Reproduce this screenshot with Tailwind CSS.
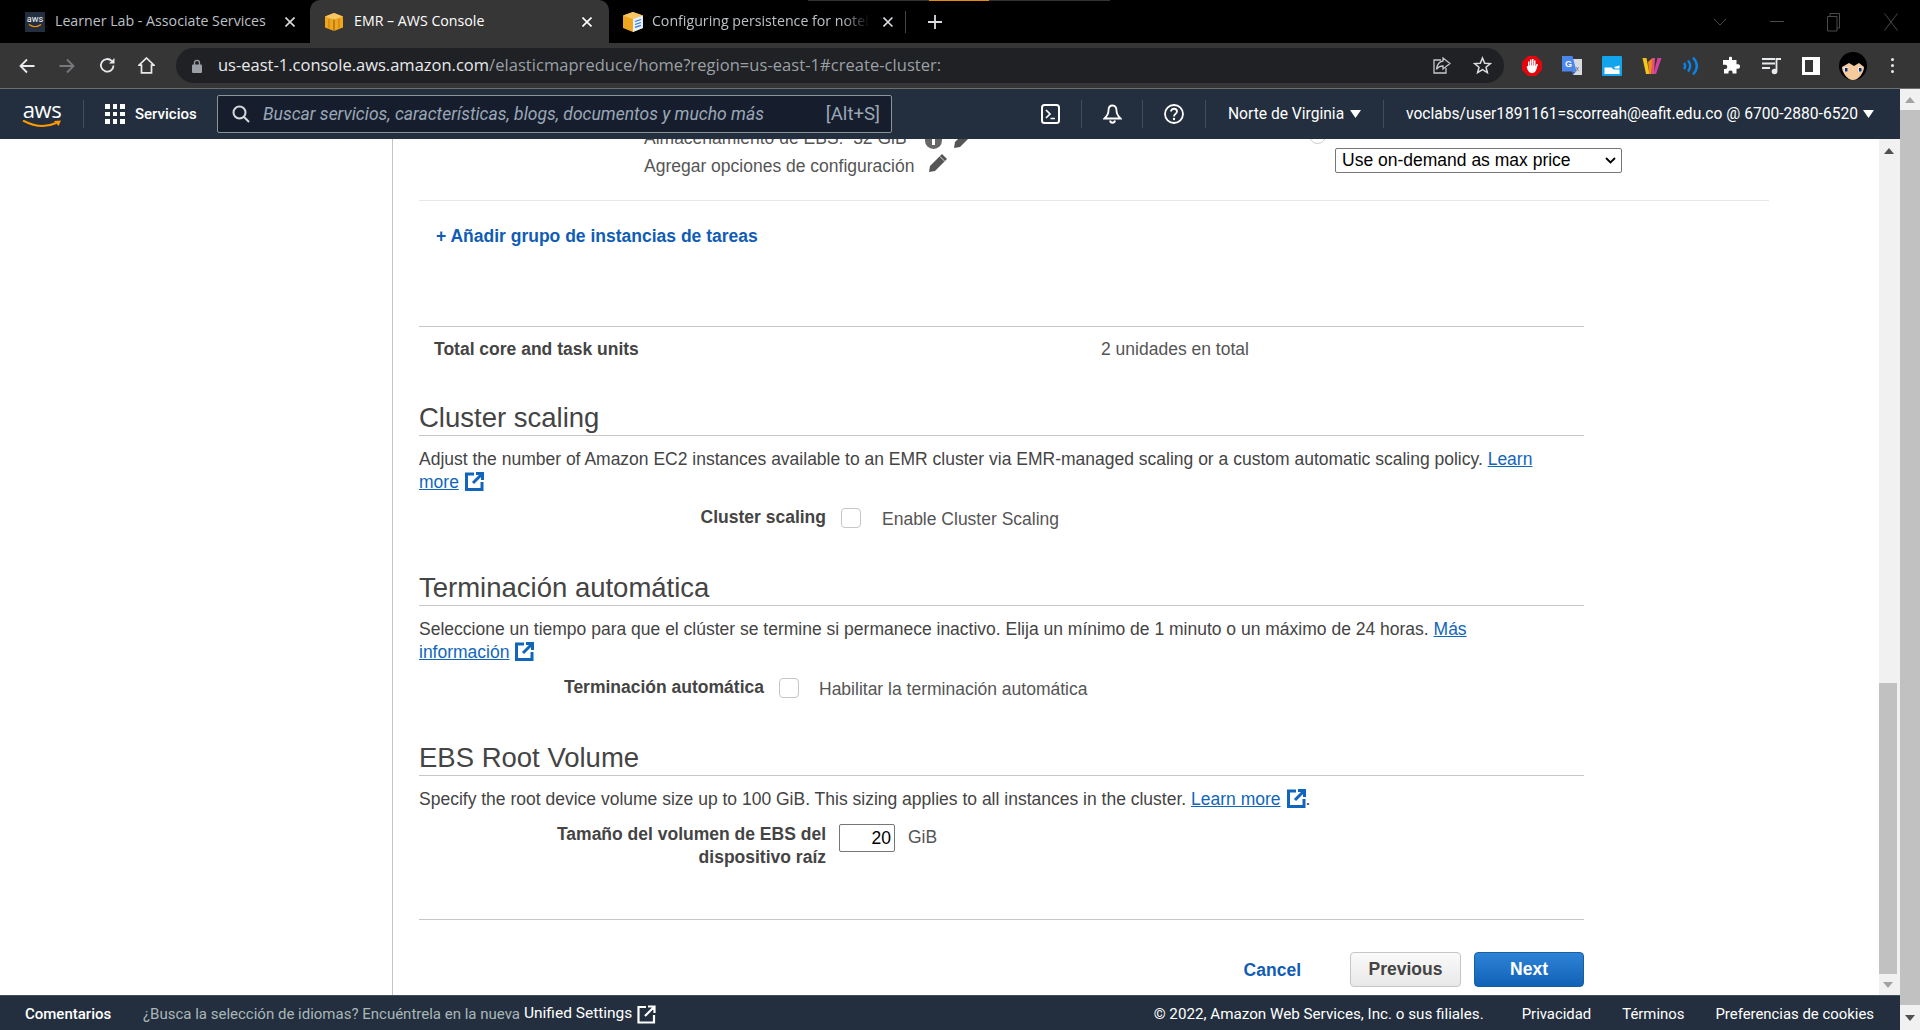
<!DOCTYPE html>
<html lang="es">
  <head>
    <meta charset="UTF-8" />
    <title>EMR – AWS Console</title>
    <script src="https://cdn.jsdelivr.net/npm/@tailwindcss/browser@4"></script>
  </head>
  <body class="relative h-[1030px] w-[1920px] overflow-hidden bg-white font-['Liberation_Sans',Arial,sans-serif] text-[17.5px] text-[#444]">
    <!-- page load streak on top of the window -->
    <div class="absolute left-[808px] top-0 h-px w-[302px] bg-[#333]"></div>
    <div class="absolute left-[929px] top-0 h-px w-[60px] bg-[#e8890c]"></div>

    <!-- tab strip -->
    <div class="flex h-[43px] items-center bg-black font-['Open_Sans',sans-serif] text-[14.2px]">
      <div class="flex h-full w-[310px] items-center pl-[25px] text-[#bdc1c6]">
        <div class="flex h-5 w-5 flex-col items-center justify-center bg-[#232f3e] font-['Roboto',sans-serif] text-[9px] leading-[9px] text-white">
          aws
          <svg class="h-[4px] w-[14px]" viewBox="0 0 14 4"><path d="M1 0.5 Q7 5 13 0.5" fill="none" stroke="#f90" stroke-width="1.2" /></svg>
        </div>
        <span class="ml-[10px] mt-[-2px] w-[213px] whitespace-nowrap">Learner Lab - Associate Services</span>
        <svg class="ml-[17px] h-[10px] w-[10px]" viewBox="0 0 10 10"><path d="M0.5 0.5 9.5 9.5M9.5 0.5 0.5 9.5" stroke="#dadce0" stroke-width="1.6" /></svg>
      </div>
      <div class="flex h-full w-[299px] items-center rounded-t-[10px] bg-[#363636] pl-[15px] text-white">
        <svg class="h-[18px] w-[18px]" viewBox="0 0 18 18"><path d="M9 0 18 3.500V14.500L9 18 0 14.500V3.500Z" fill="#f0a51e" /><path d="M0 3.500 9 0 18 3.500 9 6.500Z" fill="#f7c766" /><path d="M9 6.500V18" stroke="#8a5a10" stroke-width="1" /><path d="M4 6V15.500M14 6V15.500" stroke="#d08a12" stroke-width="1.500" /></svg>
        <span class="ml-[11px] mt-[-2px] w-[228px] whitespace-nowrap">EMR – AWS Console</span>
        <svg class="h-[10px] w-[10px]" viewBox="0 0 10 10"><path d="M0.5 0.5 9.5 9.5M9.5 0.5 0.5 9.5" stroke="#fff" stroke-width="1.6" /></svg>
      </div>
      <div class="flex h-full w-[297px] items-center pl-[14px] text-[#bdc1c6]">
        <svg class="h-5 w-5" viewBox="0 0 20 20"><path d="M10 0 20 3.500V16L10 20 0 16V3.500Z" fill="#f0a51e" /><path d="M0 3.500 10 0 20 3.500 10 7Z" fill="#f7c766" /><path d="M10 7 20 3.500V16L10 20Z" fill="#e8f0fa" /><path d="M12 9.500 18 7.500M12 12.500 18 10.500M12 15.500 18 13.500" stroke="#2d7ad6" stroke-width="1.300" /></svg>
        <span class="ml-[9px] mt-[-2px] w-[218px] overflow-hidden whitespace-nowrap [mask-image:linear-gradient(to_right,black_88%,transparent)]">Configuring persistence for notebooks</span>
        <svg class="ml-[14px] h-[10px] w-[10px]" viewBox="0 0 10 10"><path d="M0.5 0.5 9.5 9.5M9.5 0.5 0.5 9.5" stroke="#dadce0" stroke-width="1.6" /></svg>
        <div class="ml-[12px] h-[22px] w-px bg-[#444]"></div>
      </div>
      <svg class="ml-[22px] h-[14px] w-[14px]" viewBox="0 0 14 14"><path d="M7 0V14M0 7H14" stroke="#dadce0" stroke-width="1.8" /></svg>
      <div class="ml-auto flex items-center gap-[43px] pr-[22px]">
        <svg class="h-[8px] w-[14px]" viewBox="0 0 14 8"><path d="M1 1 7 7 13 1" fill="none" stroke="#4a4a4a" /></svg>
        <div class="h-px w-[14px] bg-[#4a4a4a]"></div>
        <svg class="h-[20px] w-[14px]" viewBox="0 0 14 20"><path d="M3 4V1.500H12.500V16H10M0.500 4.500H10V19H0.500Z" fill="none" stroke="#4a4a4a" /></svg>
        <svg class="h-[18px] w-[14px]" viewBox="0 0 14 18"><path d="M0.500 0.500 13.500 17.500M13.500 0.500 0.500 17.500" stroke="#4a4a4a" /></svg>
      </div>
    </div>

    <!-- browser toolbar -->
    <div class="flex h-[45px] items-center bg-[#363636]">
      <div class="flex w-[176px] items-center pl-[19px]">
        <svg class="h-4 w-4" viewBox="0 0 16 16"><path d="M15.500 8H1.500M8 1.500 1.500 8 8 14.500" fill="none" stroke="#e8eaed" stroke-width="1.800" /></svg>
        <svg class="ml-[24px] h-4 w-4" viewBox="0 0 16 16"><path d="M0.500 8H14.500M8 1.500 14.500 8 8 14.500" fill="none" stroke="#77797c" stroke-width="1.800" /></svg>
        <svg class="ml-[24px] h-[17px] w-[17px]" viewBox="0 0 17 17"><path d="M14.500 8.500A6.300 6.300 0 1 1 12.800 4" fill="none" stroke="#e8eaed" stroke-width="1.800" /><path d="M15.500 1V6.500H10Z" fill="#e8eaed" /></svg>
        <svg class="ml-[22px] h-[17px] w-[17px]" viewBox="0 0 17 17"><path d="M8.500 1 16 8.200H13.500V15.800H3.500V8.200H1Z" fill="none" stroke="#e8eaed" stroke-width="1.700" /></svg>
      </div>
      <div class="flex h-[35px] w-[1328px] items-center rounded-full bg-[#202124] pl-[16px]">
        <svg class="h-[14px] w-[10px]" viewBox="0 0 10 14"><path d="M2.500 6V3.800A2.500 2.500 0 0 1 7.500 3.800V6" fill="none" stroke="#9aa0a6" stroke-width="1.300" /><rect x="0" y="5.500" width="10" height="8.500" rx="1" fill="#9aa0a6" /></svg>
        <span class="ml-[16px] w-[1210px] whitespace-nowrap font-['Open_Sans',sans-serif] text-[16.5px] text-[#e8eaed]">us-east-1.console.aws.amazon.com<span class="tracking-[0.05px] text-[#9aa0a6]">/elasticmapreduce/home?region=us-east-1#create-cluster:</span></span>
        <svg class="ml-[4px] h-[19px] w-[19px] shrink-0" viewBox="0 0 19 19"><path d="M9 4H2V17H14V12" fill="none" stroke="#c4c7c9" stroke-width="1.300" /><path d="M11 2 18 7.500 11 13V10C8 10 6 11 4.500 13.500 5 9 7.500 5.500 11 5Z" fill="#202124" stroke="#c4c7c9" stroke-width="1.300" /></svg>
        <svg class="ml-[22px] h-[19px] w-[19px] shrink-0" viewBox="0 0 19 19"><path d="M9.500 2 11.700 7.200 17.300 7.600 13 11.200 14.400 16.700 9.500 13.700 4.600 16.700 6 11.200 1.700 7.600 7.300 7.200Z" fill="none" stroke="#dadce0" stroke-width="1.500" /></svg>
      </div>
      <!-- extensions -->
      <div class="flex items-center">
        <svg class="ml-[18px] h-5 w-5" viewBox="0 0 20 20"><path d="M6 0H14L20 6V14L14 20H6L0 14V6Z" fill="#e2070d" /><path d="M4.500 10.500 6 10V5.500H7.500V9.500H8V3.500H9.500V9.500H10V3H11.500V9.500H12V4.500H13.500V10.500L14.500 8H16L14.500 13C13.800 15.500 12.500 17 10 17 7.500 17 6.500 15.500 5.500 13.500Z" fill="#fff" /></svg>
        <svg class="ml-[20px] h-[20px] w-[21px]" viewBox="0 0 21 20"><path d="M9 3H20V19H11Z" fill="#d8dce0" /><path d="M0 0H10.500L14.500 15.500H0Z" fill="#4b86ea" /><path d="M10 15.500 11 19 14 15.500Z" fill="#3a61b8" /><text x="3" y="10.500" font-size="9" font-weight="700" fill="#fff" font-family="Liberation Sans">G</text><text x="13.500" y="15" font-size="7" fill="#666" font-family="Liberation Sans">x</text></svg>
        <svg class="ml-[19px] h-5 w-5" viewBox="0 0 20 20"><rect width="20" height="20" rx="1" fill="#12a5ec" /><path d="M2.500 11.500H9.500L11.500 13.500H17.500V18H2.500Z" fill="#fff" /><path d="M12 11 17.500 9.500V12.500H13Z" fill="#fff" /></svg>
        <svg class="ml-[20px] h-5 w-5" viewBox="0 0 20 20"><path d="M0.500 2H4.500L7.500 18H4Z" fill="#f4c61a" /><path d="M6 6 10.500 2 9.500 18H7Z" fill="#ee8a1e" /><path d="M10 2H13L12 18H9.500Z" fill="#e8517c" /><path d="M15.500 2H19.500L14 18H11.500Z" fill="#d63fa0" /></svg>
        <svg class="ml-[21px] h-5 w-[18px]" viewBox="0 0 18 20"><path d="M1 7C2.500 9 2.500 11 1 13M5 4.500C7.800 8 7.800 12 5 15.500M10 1.500C15 7 15 13 10 18.500" fill="none" stroke="#0a84e8" stroke-width="2.400" /></svg>
        <svg class="ml-[21px] h-[19px] w-[19px]" viewBox="0 0 19 19"><path d="M7 1.500C7 0.400 10 0.400 10 1.500V4H14.500V8.300H16.200C18.700 8.300 18.700 12.800 16.200 12.800H14.500V17.500H10.500V16C10.500 14 6.500 14 6.500 16V17.500H2V13H3.500C5.800 13 5.800 8.700 3.500 8.700H1V4H7Z" fill="#fff" /></svg>
        <svg class="ml-[21px] h-[18px] w-5" viewBox="0 0 20 18"><path d="M0 2H13M0 6.500H13M0 11H8" stroke="#e8eaed" stroke-width="1.800" /><path d="M14.500 14V2H19" fill="none" stroke="#e8eaed" stroke-width="1.800" /><circle cx="12.500" cy="14.500" r="2.800" fill="#e8eaed" /></svg>
        <div class="ml-[20px] h-[18px] w-[18px] border-y-[3px] border-r-[7px] border-l-[3px] border-white bg-[#363636]"></div>
        <svg class="ml-[19px] h-[28px] w-[28px]" viewBox="0 0 28 28"><circle cx="14" cy="14" r="14" fill="#000" /><path d="M3 15C3 20 8 28 14 28 20 28 25 20 25 15L20 11 15 14 10 11Z" fill="#f5cb9e" /><rect x="5" y="15" width="4" height="5" fill="#dfe5f2" /><rect x="19" y="15" width="4" height="5" fill="#dfe5f2" /><rect x="6" y="16" width="2.500" height="3.500" fill="#1c2750" /><rect x="20" y="16" width="2.500" height="3.500" fill="#1c2750" /></svg>
        <div class="ml-[24px] flex flex-col gap-[3px]"><i class="block h-[3px] w-[3px] rounded-full bg-[#e8eaed]"></i><i class="block h-[3px] w-[3px] rounded-full bg-[#e8eaed]"></i><i class="block h-[3px] w-[3px] rounded-full bg-[#e8eaed]"></i></div>
      </div>
    </div>
    <div class="h-px bg-[#6b6f70]"></div>

    <div class="flex h-[941px]">
      <div class="flex w-[1900px] flex-col">
        <!-- aws nav -->
        <div class="flex h-[50px] shrink-0 items-center bg-[#232f3e] font-['Roboto',sans-serif] text-[15.6px] text-white">
          <div class="flex w-[83px] flex-col items-center pl-[1px]">
            <span class="h-[20px] font-['Open_Sans',sans-serif] text-[22px] leading-[18px] tracking-[-0.4px]">aws</span>
            <svg class="h-[8px] w-[40px]" viewBox="0 0 40 8"><path d="M1 0.500Q19 10 34 3" fill="none" stroke="#f90" stroke-width="2" /><path d="M32 1 39 0.500 36.500 6" fill="#f90" /></svg>
          </div>
          <div class="h-[28px] w-px bg-[#414d5c]"></div>
          <div class="ml-[21px] grid h-5 w-5 grid-cols-3 gap-[3px]">
            <i class="bg-white"></i><i class="bg-white"></i><i class="bg-white"></i><i class="bg-white"></i><i class="bg-white"></i><i class="bg-white"></i><i class="bg-white"></i><i class="bg-white"></i><i class="bg-white"></i>
          </div>
          <span class="ml-[10px] mt-[1px] w-[82px] text-[15px] font-medium">Servicios</span>
          <div class="flex h-[38px] w-[675px] items-center rounded-[2px] border border-[#879596] bg-[#161e2d] pl-[14px] pr-[11px]">
            <svg class="h-[18px] w-[18px]" viewBox="0 0 18 18"><circle cx="7.500" cy="7.500" r="6" fill="none" stroke="#d5dbdb" stroke-width="2" /><path d="M11.800 11.800 17 17" stroke="#d5dbdb" stroke-width="2" /></svg>
            <span class="ml-[13px] mt-[1px] whitespace-nowrap text-[17.5px] text-[#9ba7b6] italic">Buscar servicios, características, blogs, documentos y mucho más</span>
            <span class="ml-auto mt-[1px] text-[18.6px] text-[#9ba7b6]">[Alt+S]</span>
          </div>
          <div class="flex h-[28px] items-center">
            <svg class="ml-[149px] h-5 w-[19px]" viewBox="0 0 19 20"><rect x="1" y="1" width="17" height="18" rx="2.500" fill="none" stroke="#fff" stroke-width="2" /><path d="M5 6 9 10 5 14M9.500 14.500H14" fill="none" stroke="#fff" stroke-width="1.700" /></svg>
            <div class="ml-[21px] h-full w-px bg-[#414d5c]"></div>
            <svg class="ml-[21px] h-[20px] w-[19px]" viewBox="0 0 19 20"><path d="M9.500 1.500C6.500 1.500 5.500 4 5.500 6.500 5.500 10 4 12 1.500 14.500H17.500C15 12 13.500 10 13.500 6.500 13.500 4 12.500 1.500 9.500 1.500ZM7 16.500C7.500 19.500 11.500 19.500 12 16.500" fill="none" stroke="#fff" stroke-width="1.800" /></svg>
            <div class="ml-[20px] h-full w-px bg-[#414d5c]"></div>
            <svg class="ml-[21px] h-5 w-5" viewBox="0 0 20 20"><circle cx="10" cy="10" r="9" fill="none" stroke="#fff" stroke-width="1.800" /><path d="M7 7.500C7 3.800 13 3.800 13 7.500 13 10 10 9.800 10 12.500" fill="none" stroke="#fff" stroke-width="1.800" /><circle cx="10" cy="15" r="1.200" fill="#fff" /></svg>
            <div class="ml-[21px] h-full w-px bg-[#414d5c]"></div>
            <span class="ml-[22px] mt-[1px] w-[116px] whitespace-nowrap">Norte de Virginia</span>
            <svg class="ml-[6px] h-[8px] w-[11px]" viewBox="0 0 11 8"><path d="M0 0H11L5.500 8Z" fill="#fff" /></svg>
            <div class="ml-[22px] h-full w-px bg-[#414d5c]"></div>
            <span class="ml-[22px] mt-[1px] w-[451px] whitespace-nowrap">voclabs/user1891161=scorreah@eafit.edu.co @ 6700-2880-6520</span>
            <svg class="ml-[6px] h-[8px] w-[11px]" viewBox="0 0 11 8"><path d="M0 0H11L5.500 8Z" fill="#fff" /></svg>
          </div>
        </div>

        <div class="flex h-[856px] shrink-0 overflow-hidden">
          <!-- empty left rail -->
          <div class="w-[393px] shrink-0 border-r border-[#c6c6c6]"></div>

          <div class="w-[1486px] shrink-0 overflow-hidden pl-[26px]">
            <!-- end of the previous instance group, scrolled under the nav -->
            <div class="flex h-[62px] w-[1350px] border-b border-[#e6e6e6]">
              <div class="mt-[-12px] w-[916px] pl-[225px] text-[#555]">
                <div class="flex h-[23px] items-center whitespace-nowrap">
                  Almacenamiento de EBS: &nbsp;32 GiB
                  <svg class="ml-[18px] mt-[3px] h-[17px] w-[17px]" viewBox="0 0 17 17"><circle cx="8.500" cy="8.500" r="8.500" fill="#666" /><rect x="7" y="7" width="3" height="6" fill="#fff" /><rect x="7" y="3" width="3" height="2.500" fill="#fff" /></svg>
                  <svg class="ml-[11px] h-[20px] w-[20px]" viewBox="0 0 20 20"><path d="M14 1 19 6 7 18 1 19 2 13Z" fill="#555" /></svg>
                </div>
                <div class="mt-[5px] flex h-[23px] items-center whitespace-nowrap">
                  Agregar opciones de configuración
                  <svg class="ml-[14px] mt-[-7px] h-[20px] w-[20px]" viewBox="0 0 20 20"><path d="M14 1 19 6 7 18 1 19 2 13Z" fill="#555" /><path d="M12 3.500 16.500 8" stroke="#fff" stroke-width="0.800" /></svg>
                </div>
              </div>
              <div class="relative">
                <div class="absolute left-[-26px] top-[-12px] h-[17px] w-[17px] rounded-full border border-[#ccc] bg-white"></div>
                <div class="mt-[9px] flex h-[25px] w-[287px] items-center justify-between rounded-[2px] border border-[#767676] bg-white pl-[6px] pr-[5px] text-black">
                  Use on-demand as max price
                  <svg class="h-[7px] w-[11px]" viewBox="0 0 11 7"><path d="M1 1 5.500 5.500 10 1" fill="none" stroke="#000" stroke-width="1.800" /></svg>
                </div>
              </div>
            </div>

            <div class="h-[125px] pl-[17px] pt-[24px] font-bold leading-[23px] text-[#105cb6]">+ Añadir grupo de instancias de tareas</div>

            <div class="flex h-[75px] w-[1165px] border-t border-[#c6c6c6] pl-[15px] pt-[11px] leading-[23px]">
              <span class="w-[667px] font-bold">Total core and task units</span>
              <span class="text-[#555]">2 unidades en total</span>
            </div>

            <section class="h-[170px] w-[1165px]">
              <h2 class="h-[35px] border-b border-[#c6c6c6] text-[27.5px] leading-[34px]">Cluster scaling</h2>
              <p class="mt-[12px] w-[1130px] leading-[23px]">Adjust the number of Amazon EC2 instances available to an EMR cluster via EMR-managed scaling or a custom automatic scaling policy. <a class="text-[#16b] underline">Learn more</a><svg class="ml-[6px] inline h-[19px] w-[19px] align-[-3px]" viewBox="0 0 19 19"><path d="M9 2H1.500V17.500H17V10M11 1.500H17.500V8M17 2 8 11" fill="none" stroke="#16b" stroke-width="3" /></svg></p>
              <div class="mt-[12px] flex">
                <span class="w-[407px] text-right font-bold leading-[23px]">Cluster scaling</span>
                <span class="ml-[15px] mt-[2px] h-5 w-5 rounded-[4px] border border-[#c6c6c6] bg-white"></span>
                <span class="ml-[21px] mt-[2px] leading-[23px] text-[#555]">Enable Cluster Scaling</span>
              </div>
            </section>

            <section class="h-[170px] w-[1165px]">
              <h2 class="h-[35px] border-b border-[#c6c6c6] text-[27.5px] leading-[34px]">Terminación automática</h2>
              <p class="mt-[12px] w-[1130px] leading-[23px]">Seleccione un tiempo para que el clúster se termine si permanece inactivo. Elija un mínimo de 1 minuto o un máximo de 24 horas. <a class="text-[#16b] underline">Más información</a><svg class="ml-[6px] inline h-[19px] w-[19px] align-[-3px]" viewBox="0 0 19 19"><path d="M9 2H1.500V17.500H17V10M11 1.500H17.500V8M17 2 8 11" fill="none" stroke="#16b" stroke-width="3" /></svg></p>
              <div class="mt-[12px] flex">
                <span class="w-[345px] text-right font-bold leading-[23px]">Terminación automática</span>
                <span class="ml-[15px] mt-[2px] h-5 w-5 rounded-[4px] border border-[#c6c6c6] bg-white"></span>
                <span class="ml-[20px] mt-[2px] leading-[23px] text-[#555]">Habilitar la terminación automática</span>
              </div>
            </section>

            <section class="h-[178px] w-[1165px]">
              <h2 class="h-[35px] border-b border-[#c6c6c6] text-[27.5px] leading-[34px]">EBS Root Volume</h2>
              <p class="mt-[12px] w-[1130px] leading-[23px]">Specify the root device volume size up to 100 GiB. This sizing applies to all instances in the cluster. <a class="text-[#16b] underline">Learn more</a><svg class="ml-[6px] inline h-[19px] w-[19px] align-[-3px]" viewBox="0 0 19 19"><path d="M9 2H1.500V17.500H17V10M11 1.500H17.500V8M17 2 8 11" fill="none" stroke="#16b" stroke-width="3" /></svg>.</p>
              <div class="mt-[12px] flex">
                <span class="w-[407px] pl-[120px] text-right font-bold leading-[23px]">Tamaño del volumen de EBS del dispositivo raíz</span>
                <span class="ml-[13px] mt-[1px] flex h-[28px] w-[56px] items-center justify-end rounded-[2px] border border-[#767676] pr-[3px] text-black">20</span>
                <span class="ml-[13px] mt-[3px] leading-[23px] text-[#555]">GiB</span>
              </div>
            </section>

            <div class="flex w-[1165px] items-center justify-end border-t border-[#c6c6c6] pt-[32px] font-bold">
              <a class="mr-[49px] mt-[1px] text-[#105cb6]">Cancel</a>
              <button class="mr-[13px] h-[35px] w-[111px] rounded-[4px] border border-[#c6c6c6] bg-linear-to-b from-[#fafafa] to-[#e8e8e8] text-[#444]">Previous</button>
              <button class="h-[35px] w-[110px] rounded-[4px] border border-[#15609f] bg-linear-to-b from-[#2e83d6] to-[#1062b6] text-white">Next</button>
            </div>
          </div>

          <!-- inner scrollbar -->
          <div class="flex w-[21px] shrink-0 flex-col items-start bg-[#f1f1f1]">
            <div class="flex h-[24px] w-[19px] items-center justify-center"><svg class="h-[6px] w-[10px]" viewBox="0 0 10 6"><path d="M5 0 10 6H0Z" fill="#505050" /></svg></div>
            <div class="mt-[520px] h-[291px] w-[18px] bg-[#c1c1c1]"></div>
            <div class="flex h-[21px] w-[18px] items-center justify-center"><svg class="h-[6px] w-[10px]" viewBox="0 0 10 6"><path d="M0 0H10L5 6Z" fill="#a3a3a3" /></svg></div>
          </div>
        </div>

        <!-- console footer -->
        <div class="flex h-[35px] shrink-0 items-center border-t border-[#414d5c] bg-[#232f3e] pl-[25px] pt-[2px] font-['Roboto',sans-serif] text-[15px] text-white">
          <span class="w-[118px] font-medium">Comentarios</span>
          <span class="text-[#aab7b8]">¿Busca la selección de idiomas? Encuéntrela en la nueva</span>
          <span class="ml-[4px] text-[15.5px]">Unified Settings</span>
          <svg class="ml-[5px] h-[19px] w-[19px]" viewBox="0 0 19 19"><path d="M9 2H1.500V17.500H17V10M11 1.500H17.500V8M17 2 8 11" fill="none" stroke="#fff" stroke-width="2.200" /></svg>
          <span class="ml-auto text-[15.2px]">© 2022, Amazon Web Services, Inc. o sus filiales.</span>
          <span class="ml-[38px] text-[14.9px]">Privacidad</span>
          <span class="ml-[31px] text-[14.9px]">Términos</span>
          <span class="ml-[31px] mr-[26px] text-[14.9px]">Preferencias de cookies</span>
        </div>
      </div>

      <!-- outer scrollbar -->
      <div class="flex w-5 flex-col items-center bg-[#f1f1f1]">
        <div class="flex h-[21px] w-full items-center justify-center"><svg class="h-[6px] w-[10px]" viewBox="0 0 10 6"><path d="M5 0 10 6H0Z" fill="#a3a3a3" /></svg></div>
        <div class="h-[895px] w-full bg-[#c1c1c1]"></div>
        <div class="flex h-[25px] w-full items-center justify-center"><svg class="h-[6px] w-[10px]" viewBox="0 0 10 6"><path d="M0 0H10L5 6Z" fill="#505050" /></svg></div>
      </div>
    </div>
  </body>
</html>
